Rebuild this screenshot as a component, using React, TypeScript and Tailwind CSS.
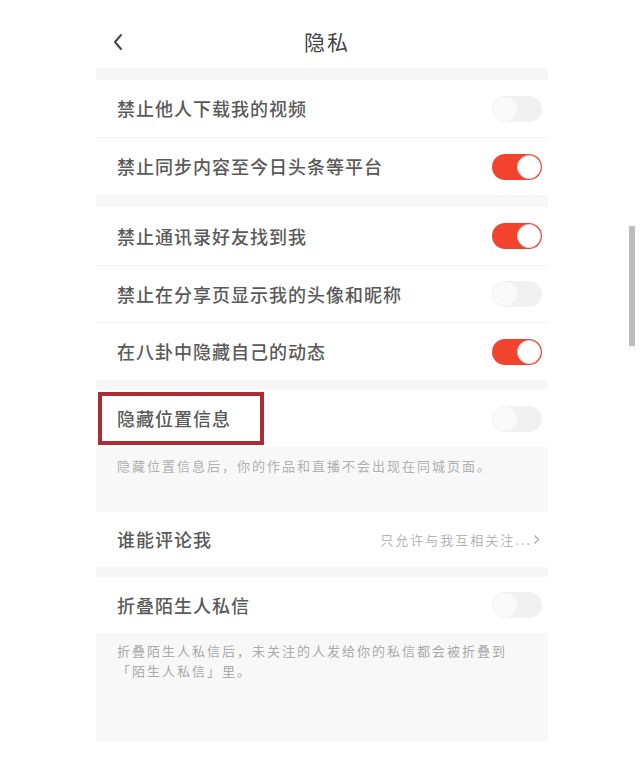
import React from 'react';

const font = { fontFamily: '"Noto Sans CJK SC", "Noto Sans", sans-serif' };

function Toggle({ on }: { on: boolean }) {
  return on ? (
    <div className="w-[50px] h-[26px] rounded-full bg-[#f2432f] flex items-center justify-end p-[1px]">
      <div className="w-[24px] h-[24px] rounded-full bg-white border border-[#d9d9d9]" />
    </div>
  ) : (
    <div className="w-[50px] h-[26px] rounded-full bg-[#f1f1f1] flex items-center justify-start p-[1px]">
      <div className="w-[24px] h-[24px] rounded-full bg-[#fafafa]" />
    </div>
  );
}

function Row({ label, on, h = 'h-[57px]', boxed }: { label: string; on: boolean; h?: string; boxed?: boolean }) {
  return (
    <div className={`relative flex items-center justify-between pl-[21px] pr-[6px] bg-white ${h}`}>
      <span className="text-[18px] tracking-[1px] text-[#5a5a5a] font-medium">{label}</span>
      <Toggle on={on} />
      {boxed && (
        <div className="absolute left-[2px] top-[2px] w-[166px] h-[53px] border-[4px] border-[#ad2b33]" />
      )}
    </div>
  );
}

const Gap = ({ h = 'h-[12px]' }: { h?: string }) => <div className={`${h} bg-[#f7f7f7]`} />;
const Line = () => <div className="h-px bg-[#f2f2f2]" />;

export default function App() {
  return (
    <div className="relative w-[640px] h-[759px] bg-white overflow-hidden" style={font}>
      <div className="ml-[96px] w-[452px]">
        {/* header */}
        <div className="relative h-[68px] flex items-center justify-center">
          <svg className="absolute left-[16px] top-[33px]" width="12" height="18" viewBox="0 0 12 18" fill="none">
            <path d="M9 2 L3 9 L9 16" stroke="#444" strokeWidth="2" strokeLinecap="round" strokeLinejoin="round" />
          </svg>
          <span className="text-[21px] tracking-[2px] text-[#444] mt-[16px] ml-[10px]">隐私</span>
        </div>
        <Gap />
        <Row label="禁止他人下载我的视频" on={false} />
        <Line />
        <Row label="禁止同步内容至今日头条等平台" on={true} />
        <Gap />
        <Row label="禁止通讯录好友找到我" on={true} h="h-[58px]" />
        <Line />
        <Row label="禁止在分享页显示我的头像和昵称" on={false} h="h-[56px]" />
        <Line />
        <Row label="在八卦中隐藏自己的动态" on={true} />
        <Gap h="h-[10px]" />
        <Row label="隐藏位置信息" on={false} boxed />
        <div className="h-[65px] bg-[#f8f8f8] pl-[21px] pt-[9px]">
          <p className="text-[13px] tracking-[2px] text-[#b0b0b0]">隐藏位置信息后，你的作品和直播不会出现在同城页面。</p>
        </div>
        <div className="h-[55px] flex items-center justify-between pl-[21px] pr-[8px] bg-white">
          <span className="text-[18px] tracking-[1px] text-[#5a5a5a] font-medium">谁能评论我</span>
          <span className="text-[13px] tracking-[2px] text-[#b5b5b5] flex items-center">
            只允许与我互相关注...
            <svg className="ml-[1px]" width="7" height="11" viewBox="0 0 7 11" fill="none">
              <path d="M1.5 1.5 L5.5 5.5 L1.5 9.5" stroke="#aaa" strokeWidth="1.3" />
            </svg>
          </span>
        </div>
        <Gap h="h-[10px]" />
        <Row label="折叠陌生人私信" on={false} h="h-[56px]" />
        <div className="h-[109px] bg-[#f8f8f8] pl-[21px] pr-[21px] pt-[8px]">
          <p className="text-[13px] tracking-[2px] leading-[20px] text-[#aaa]">
            折叠陌生人私信后，未关注的人发给你的私信都会被折叠到「陌生人私信」里。
          </p>
        </div>
      </div>
      <div className="absolute left-[629px] top-[226px] w-[6px] h-[120px] bg-[#bcbcbc]" />
    </div>
  );
}
